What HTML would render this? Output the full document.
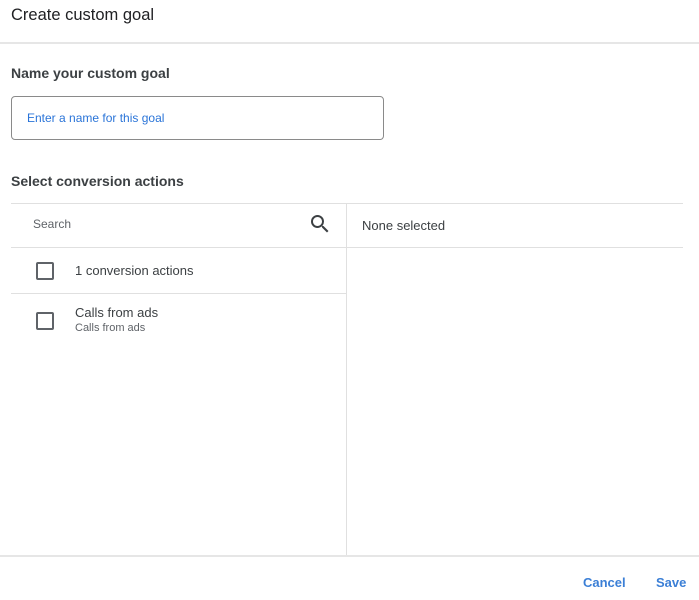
<!DOCTYPE html>
<html><head><style>
body{margin:0;width:699px;height:600px;background:#fff;font-family:"Liberation Sans",sans-serif;position:relative;overflow:hidden;color:#202124}
.a{position:absolute}
.h{height:1px;background:#e0e0e0}
.cb{width:14px;height:14px;border:2px solid #5f6368;border-radius:2px}
</style></head><body>
<div class="a" style="left:11px;top:6px;font-size:16.5px;color:#202124">Create custom goal</div>
<div class="a" style="left:0;top:42px;width:699px;height:2px;background:#e6e6e6"></div>
<div class="a" style="left:11px;top:65px;font-size:14px;font-weight:bold;color:#3c4043">Name your custom goal</div>
<div class="a" style="left:11px;top:96px;width:371px;height:42px;border:1px solid #8a8a8a;border-radius:4px"></div>
<div class="a" style="left:27px;top:111px;font-size:12px;color:#2a74d8">Enter a name for this goal</div>
<div class="a" style="left:11px;top:173px;font-size:14px;font-weight:bold;color:#3c4043">Select conversion actions</div>
<div class="a h" style="left:11px;top:203px;width:672px"></div>
<div class="a" style="left:346px;top:203px;width:1px;height:353px;background:#e0e0e0"></div>
<div class="a h" style="left:11px;top:247px;width:672px"></div>
<div class="a h" style="left:11px;top:293px;width:335px"></div>
<div class="a" style="left:33px;top:217px;font-size:12px;color:#5f6368">Search</div>
<svg class="a" style="left:308px;top:212px" width="24" height="24" viewBox="0 0 24 24"><path fill="#3c4043" d="M15.5 14h-.79l-.28-.27A6.47 6.47 0 0016 9.5 6.5 6.5 0 109.5 16c1.61 0 3.09-.59 4.23-1.57l.27.28v.79l5 4.99L20.49 19l-4.99-5zm-6 0C7.01 14 5 11.990 5 9.5S7.01 5 9.5 5 14 7.01 14 9.5 11.99 14 9.5 14z"/></svg>
<div class="a" style="left:362px;top:218px;font-size:13px;color:#3c4043">None selected</div>
<div class="a cb" style="left:36px;top:262px"></div>
<div class="a" style="left:75px;top:263px;font-size:13px;color:#3c4043">1 conversion actions</div>
<div class="a cb" style="left:36px;top:312px"></div>
<div class="a" style="left:75px;top:305px;font-size:13px;color:#3c4043">Calls from ads</div>
<div class="a" style="left:75px;top:322px;font-size:11px;color:#5f6368">Calls from ads</div>
<div class="a" style="left:0;top:555px;width:699px;height:2px;background:#e6e6e6"></div>
<div class="a" style="left:583px;top:575px;font-size:13px;font-weight:bold;color:#3b7fd6">Cancel</div>
<div class="a" style="left:656px;top:575px;font-size:13px;font-weight:bold;color:#3b7fd6">Save</div>
</body></html>
